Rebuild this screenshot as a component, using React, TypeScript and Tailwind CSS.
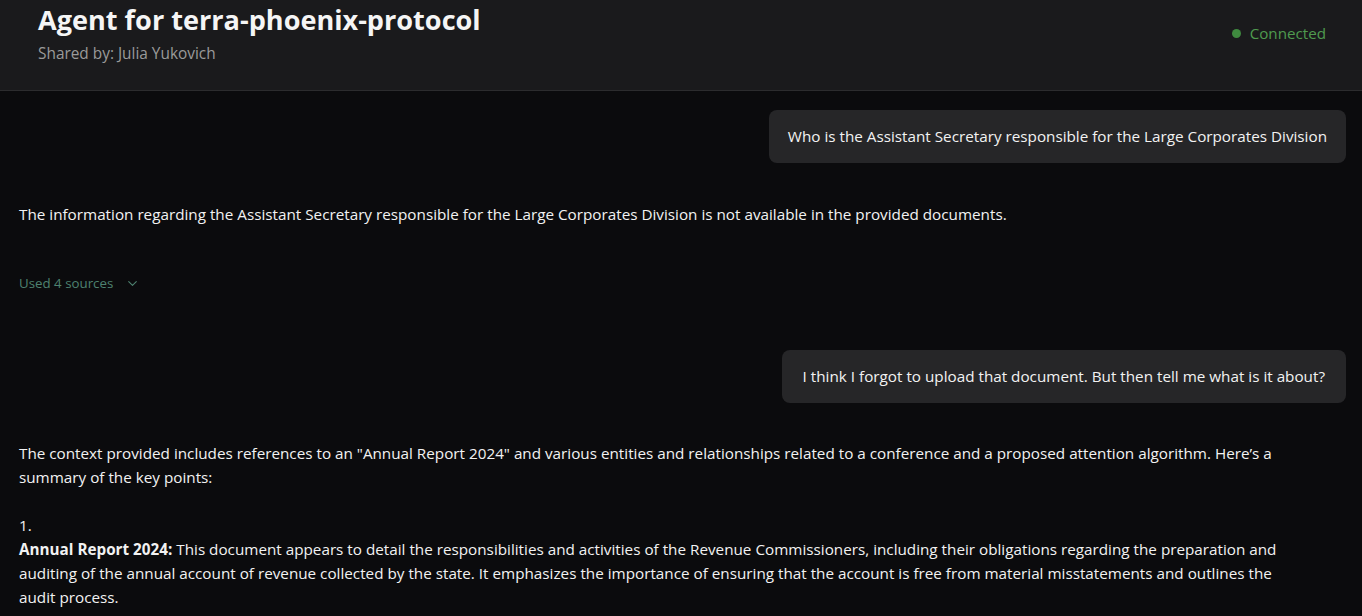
import React from "react";

const font = { fontFamily: '"Segoe UI", "Open Sans", "Noto Sans", sans-serif' };

export default function App() {
  return (
    <div className="h-[616px] w-full overflow-hidden bg-[#0b0b0d] text-[#f2f2f2]" style={font}>
      <header className="flex h-[91px] items-start justify-between border-b border-[#2c2c2e] bg-[#1a1a1c] pl-[38px] pr-[36px]">
        <div className="flex flex-col">
          <h1 className="mt-[2px] text-[27.1px] font-bold leading-[36px] text-[#f5f5f5]">Agent for terra-phoenix-protocol</h1>
          <p className="mt-[6px] text-[15.4px] leading-[20px] text-[#9a9a9a]">Shared by: Julia Yukovich</p>
        </div>
        <div className="mt-[22px] flex items-center gap-[9px] text-[15.2px] text-[#4f9a4f]">
          <span className="h-[9px] w-[9px] rounded-full bg-[#3f8a3f]" />
          <span>Connected</span>
        </div>
      </header>
      <main className="flex flex-col px-[16px] pt-[19px]">
        <div className="flex justify-end">
          <div className="rounded-[8px] bg-[#262628] px-[19px] py-[15px] text-[15.25px] leading-[23px] text-[#f2f2f2]">
            Who is the Assistant Secretary responsible for the Large Corporates Division
          </div>
        </div>
        <p className="mt-[39px] pl-[3px] text-[15.25px] leading-[24px]">
          The information regarding the Assistant Secretary responsible for the Large Corporates Division is not available in the provided documents.
        </p>
        <div className="mt-[48px] flex items-center gap-[13px] pl-[3px] text-[13.3px] text-[#4e8270]">
          <span>Used 4 sources</span>
          <svg width="13" height="13" viewBox="0 0 24 24" fill="none" stroke="currentColor" strokeWidth="2" strokeLinecap="round" strokeLinejoin="round">
            <path d="M5 8.5l7 7 7-7" />
          </svg>
        </div>
        <div className="mt-[56px] flex justify-end">
          <div className="rounded-[8px] bg-[#262628] px-[21px] py-[15px] text-[15.25px] leading-[23px] text-[#f2f2f2]">
            I think I forgot to upload that document. But then tell me what is it about?
          </div>
        </div>
        <div className="mt-[38px] pl-[3px] pr-[50px] text-[15.25px] leading-[24px]">
          <p>
            The context provided includes references to an "Annual Report 2024" and various entities and relationships related to a conference and a proposed attention algorithm. Here’s a summary of the key points:
          </p>
          <p className="mt-[24px]">1.</p>
          <p>
            <strong className="font-bold">Annual Report 2024:</strong> This document appears to detail the responsibilities and activities of the Revenue Commissioners, including their obligations regarding the preparation and auditing of the annual account of revenue collected by the state. It emphasizes the importance of ensuring that the account is free from material misstatements and outlines the audit process.
          </p>
        </div>
      </main>
    </div>
  );
}
